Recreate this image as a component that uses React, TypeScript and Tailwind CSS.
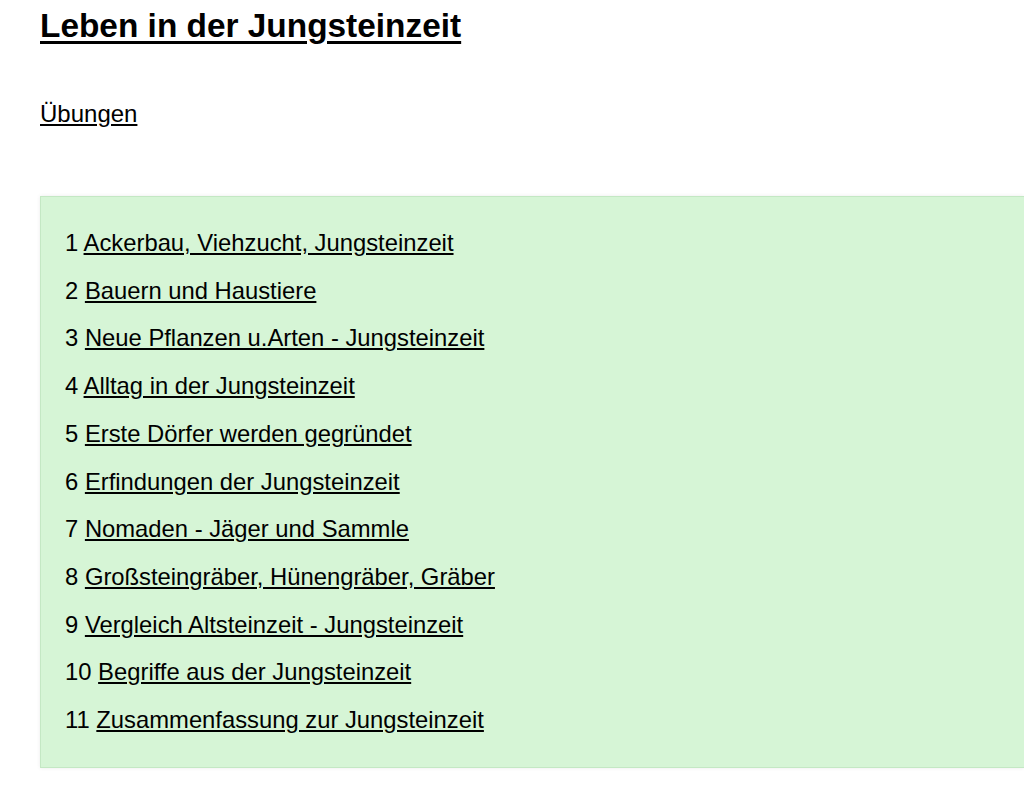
const lessons: string[] = [
  'Ackerbau, Viehzucht, Jungsteinzeit',
  'Bauern und Haustiere',
  'Neue Pflanzen u.Arten - Jungsteinzeit',
  'Alltag in der Jungsteinzeit',
  'Erste Dörfer werden gegründet',
  'Erfindungen der Jungsteinzeit',
  'Nomaden - Jäger und Sammle',
  'Großsteingräber, Hünengräber, Gräber',
  'Vergleich Altsteinzeit - Jungsteinzeit',
  'Begriffe aus der Jungsteinzeit',
  'Zusammenfassung zur Jungsteinzeit',
];

export default function App() {
  return (
    <div
      className="min-h-[802px] bg-white pl-[40px] text-black overflow-hidden"
      style={{ fontFamily: '"Liberation Sans", Arial, sans-serif' }}
    >
      {/* Titel */}
      <h1 className="pt-[7px] text-[33.4px] font-bold leading-[38px] underline decoration-[3px] underline-offset-[4px]">
        Leben in der Jungsteinzeit
      </h1>

      <p className="mt-[55px] text-[24px] leading-[28px]">
        <a href="#" className="underline underline-offset-[2px]">
          Übungen
        </a>
      </p>

      {/* Liste der Arbeitsblätter */}
      <div className="mt-[68px] border border-r-0 border-[#c4e8c4] bg-[#d6f5d6] pl-[24px] pt-[22px] pb-[23px] shadow-[0_0_4px_rgba(0,0,0,0.08)]">
        <ul>
          {lessons.map((title, i) => (
            <li key={i} className="text-[23.8px] leading-[47.7px]">
              {i + 1}{' '}
              <a href="#" className="underline underline-offset-[2px]">
                {title}
              </a>
            </li>
          ))}
        </ul>
      </div>
    </div>
  );
}
